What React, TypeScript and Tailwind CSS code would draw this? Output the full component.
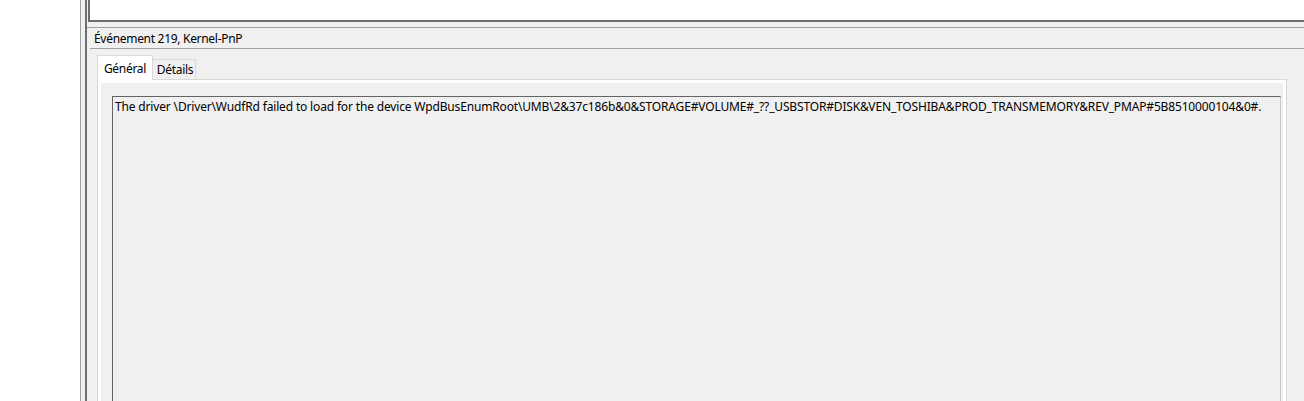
import React from "react";

const font = { fontFamily: '"Noto Sans", "Segoe UI", sans-serif' };

export default function App() {
  return (
    <div className="flex h-[401px] w-[1304px] overflow-hidden bg-white text-[12px] text-black" style={font}>
      <div className="w-[80px] shrink-0 bg-white" />
      <div className="flex min-w-0 flex-1 border-l border-[#a0a0a0] bg-[#f0f0f0] pl-[4px]">
        <div className="flex min-w-0 flex-1 flex-col border-l-2 border-[#6d6d6d]">
          {/* top list pane */}
          <div className="flex h-[22px] shrink-0 pl-[1px]">
            <div className="flex-1 border-b-2 border-l-2 border-[#6d6d6d] bg-white" />
          </div>
          {/* splitter */}
          <div className="h-[5px] shrink-0" />
          {/* details pane */}
          <div className="flex min-w-0 flex-1 flex-col border-t border-[#a0a0a0] pl-[3px]">
            <div className="flex h-[21px] shrink-0 items-center border-b border-[#a0a0a0] pl-[4px] pt-[2px] leading-none tracking-[-0.3px]">
              Événement 219, Kernel-PnP
            </div>
            <div className="flex min-w-0 flex-1 flex-col pl-[7px] pt-[5px]">
              {/* tabs */}
              <div className="flex h-[25px] shrink-0 items-end tracking-[-0.3px]">
                <div className="relative z-10 -mb-px flex h-[25px] w-[56px] items-start justify-center border border-b-0 border-[#d9d9d9] bg-white pt-[7px] leading-none">
                  Général
                </div>
                <div className="flex h-[20px] w-[43px] items-start justify-center border border-b-0 border-l-0 border-[#d9d9d9] bg-[#f0f0f0] pl-[2px] pt-[4px] leading-none">
                  Détails
                </div>
              </div>
              {/* tab page */}
              <div className="mr-[17px] flex min-w-0 flex-1 border border-b-0 border-[#d9d9d9] bg-white px-[3px] pt-[3px]">
                <div className="flex min-w-0 flex-1 bg-[#f0f0f0] pl-[11px] pr-[2px] pt-[13px]">
                  <div className="min-w-0 flex-1 overflow-hidden whitespace-nowrap border-l border-t border-r border-[#646464] border-r-[#c8c8c8] bg-[#f0f0f0] pl-[2px] pt-[2px] leading-[15px] tracking-[-0.16px]">
                    The driver \Driver\WudfRd failed to load for the device WpdBusEnumRoot\UMB\2&amp;37c186b&amp;0&amp;STORAGE#VOLUME#_??_USBSTOR#DISK&amp;VEN_TOSHIBA&amp;PROD_TRANSMEMORY&amp;REV_PMAP#5B8510000104&amp;0#.
                  </div>
                </div>
              </div>
            </div>
          </div>
        </div>
      </div>
    </div>
  );
}
